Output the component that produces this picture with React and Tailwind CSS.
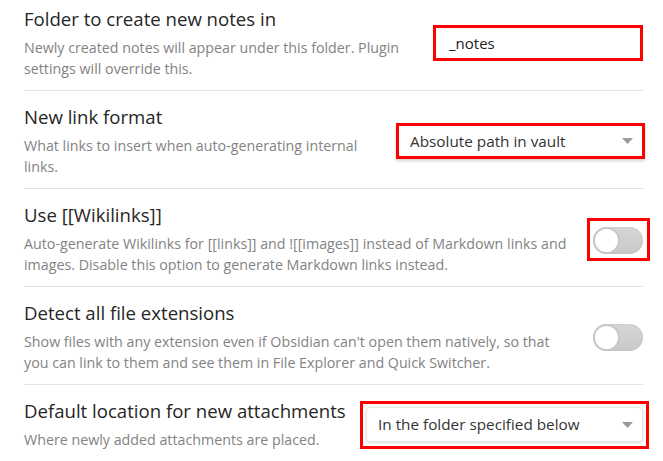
import React from 'react'

const font = { fontFamily: '"Open Sans", "Noto Sans", sans-serif' }

function Caret() {
  return (
    <svg width="11" height="6" viewBox="0 0 11 6" className="shrink-0">
      <path d="M0 0 L11 0 L5.5 6 Z" fill="#9a9a9a" />
    </svg>
  )
}

function Toggle() {
  return (
    <div className="flex h-[27px] w-[50px] items-center rounded-full bg-gradient-to-b from-[#d6d6d6] to-[#c9c9c9] shadow-[inset_0_0_2px_rgba(0,0,0,0.12)]">
      <div className="h-[27px] w-[27px] rounded-full border-2 border-[#c7c7c7] bg-white" />
    </div>
  )
}

function Row({ title, desc, first, children }) {
  return (
    <div className={`flex items-center border-b border-[#e2e2e2] ${first ? 'pt-[7px]' : 'pt-[14px]'} pb-[11px]`}>
      <div className="min-w-0 flex-1 pr-2">
        <div className="whitespace-nowrap text-[18.6px] leading-6 text-[#262626]">{title}</div>
        <div className="mt-[6px] text-[14.25px] leading-[21px] text-[#838383]">
          {desc.map((line) => (
            <div key={line} className="whitespace-nowrap">{line}</div>
          ))}
        </div>
      </div>
      {children}
    </div>
  )
}

export default function App() {
  return (
    <div className="h-[461px] w-[663px] overflow-hidden bg-white pl-6 pr-[20px]" style={font}>
      <Row
        first
        title="Folder to create new notes in"
        desc={['Newly created notes will appear under this folder. Plugin', 'settings will override this.']}
      >
        <div className="flex h-[36px] w-[210px] shrink-0 items-center border-[3px] border-[#ff0000] bg-white pl-[13px] text-[15px] text-[#222]">
          _notes
        </div>
      </Row>

      <Row
        title="New link format"
        desc={['What links to insert when auto-generating internal', 'links.']}
      >
        <div className="-mr-[2px] flex h-[36px] w-[249px] shrink-0 items-center justify-between border-[3px] border-[#ff0000] bg-white pl-[11px] pr-[9px] text-[15.3px] text-[#333] shadow-[0_2px_3px_rgba(0,0,0,0.18)]">
          <span>Absolute path in vault</span>
          <Caret />
        </div>
      </Row>

      <Row
        title="Use [[Wikilinks]]"
        desc={[
          'Auto-generate Wikilinks for [[links]] and ![[images]] instead of Markdown links and',
          'images. Disable this option to generate Markdown links instead.',
        ]}
      >
        <div className="-mr-[7px] flex h-[43px] w-[63px] shrink-0 items-center justify-start border-[3px] border-[#ff0000] pl-[3px] pt-[3px]">
          <Toggle />
        </div>
      </Row>

      <Row
        title="Detect all file extensions"
        desc={[
          "Show files with any extension even if Obsidian can't open them natively, so that",
          'you can link to them and see them in File Explorer and Quick Switcher.',
        ]}
      >
        <div className="shrink-0">
          <Toggle />
        </div>
      </Row>

      <Row
        title="Default location for new attachments"
        desc={['Where newly added attachments are placed.']}
      >
        <div className="-mr-[6px] flex h-[48px] w-[289px] shrink-0 items-center border-[3px] border-[#ff0000] bg-white px-[3px]">
          <div className="flex h-[35px] flex-1 items-center justify-between rounded-[4px] border border-[#e6e6e6] bg-white pl-[11px] pr-[9px] text-[15.3px] text-[#333] shadow-[0_1px_3px_rgba(0,0,0,0.15)]">
            <span>In the folder specified below</span>
            <Caret />
          </div>
        </div>
      </Row>
    </div>
  )
}
